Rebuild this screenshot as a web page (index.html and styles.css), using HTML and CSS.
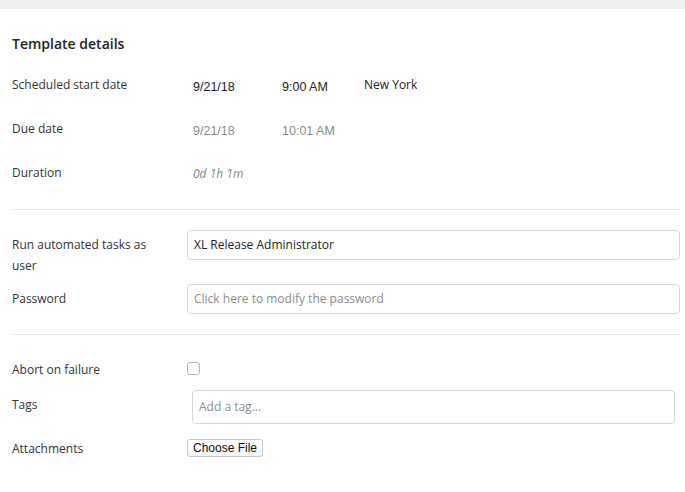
FILE: index.html
```
<!DOCTYPE html>
<html>
<head>
<meta charset="utf-8">
<link rel="stylesheet" href="styles.css">
</head>
<body>
<div class="topband"></div>
<div class="page">
  <h2 class="title">Template details</h2>
  <div class="dates">
    <div class="label">Scheduled start date</div>
    <div class="vals">
      <span class="v date dark">9/21/18</span>
      <span class="v time dark">9:00 AM</span>
      <span class="tz">New York</span>
    </div>
    <div class="label">Due date</div>
    <div class="vals">
      <span class="v date muted">9/21/18</span>
      <span class="v time muted">10:01 AM</span>
    </div>
    <div class="label">Duration</div>
    <div class="vals">
      <span class="duration">0d 1h 1m</span>
    </div>
  </div>
  <hr class="sep sep1">
  <div class="form">
    <div class="label lbl-input">Run automated tasks as user</div>
    <div class="field"><div class="input">XL Release Administrator</div></div>
    <div class="label lbl-input">Password</div>
    <div class="field"><div class="input placeholder">Click here to modify the password</div></div>
  </div>
  <hr class="sep sep2">
  <div class="form form2">
    <div class="label">Abort on failure</div>
    <div class="field"><span class="checkbox"></span></div>
    <div class="label lbl-tags">Tags</div>
    <div class="field"><div class="tags placeholder">Add a tag...</div></div>
    <div class="label lbl-att">Attachments</div>
    <div class="field"><button class="filebtn">Choose File</button></div>
  </div>
</div>
</body>
</html>
```
FILE: styles.css
```
* { box-sizing: border-box; }
html, body { margin: 0; padding: 0; background: #fff; }
body {
  font-family: "Open Sans", "Liberation Sans", sans-serif;
  color: #333;
  font-size: 12px;
}
.topband { height: 9px; background: #efefef; }
.page { padding: 0 5px 0 12px; }
.title {
  margin: 25px 0 0;
  font-size: 14px;
  font-weight: 600;
  line-height: 20px;
  color: #222;
}
.dates {
  margin-top: 8px;
  display: grid;
  grid-template-columns: 175px 1fr;
  grid-auto-rows: 44px;
  align-items: center;
}
.label { font-size: 12px; line-height: 21px; color: #333; }
.vals { display: flex; align-items: center; padding-left: 6px; }
.v {
  font-family: "Liberation Sans", Arial, sans-serif;
  font-size: 12.5px;
  padding-top: 6px;
}
.date { width: 89px; }
.time { width: 82px; }
.dark { color: #222; }
.muted { color: #8a8a8a; }
.tz { font-size: 12px; color: #222; padding-top: 1px; }
.duration { font-style: italic; color: #888; font-size: 12px; padding-top: 2px; }
.sep { border: 0; border-top: 1px solid #e6e6e6; margin: 0; }
.sep1 { margin-top: 15px; }
.form {
  margin-top: 20px;
  display: grid;
  grid-template-columns: 175px 1fr;
  row-gap: 8px;
  align-items: start;
}
.lbl-input { padding-top: 4px; padding-right: 25px; }
.input {
  height: 30px;
  border: 1px solid #d6d6d6;
  border-radius: 4px;
  padding: 0 6px;
  line-height: 28px;
  font-size: 12px;
  color: #222;
}
.placeholder { color: #8c8c8c; }
.sep2 { margin-top: 20px; }
.form2 { margin-top: 24px; row-gap: 0; }
.checkbox {
  display: block;
  margin-top: 3px;
  width: 13px;
  height: 13px;
  border: 1px solid #b4b4b4;
  border-radius: 3px;
  background: #fff;
}
.lbl-tags { margin-top: 14px; }
.tags {
  margin-top: 10px;
  margin-left: 5px;
  margin-right: 5px;
  height: 34px;
  border: 1px solid #d6d6d6;
  border-radius: 4px;
  padding: 0 6px;
  line-height: 32px;
  font-size: 12px;
}
.lbl-att { margin-top: 14px; }
.filebtn {
  margin-top: 15px;
  font-family: "Liberation Sans", Arial, sans-serif;
  font-size: 12px;
  color: #111;
  background: linear-gradient(#fff, #f4f4f4);
  border: 1px solid #c8c8c8;
  border-radius: 3px;
  height: 18px;
  padding: 0 5px;
  line-height: 16px;
}
```
